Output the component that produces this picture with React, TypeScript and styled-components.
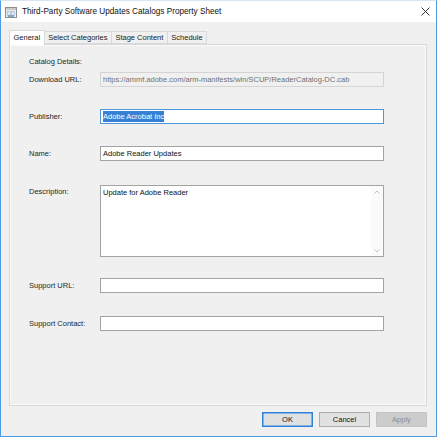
import React, { FC } from 'react';
import styled, { createGlobalStyle } from 'styled-components';

const GlobalStyle = createGlobalStyle`
    html, body {
        margin: 0;
        padding: 0;
        background: #f0f0f0;
        overflow: hidden;
    }
    * {
        box-sizing: border-box;
    }
`;

const Window = styled.div`
    width: 437px;
    height: 437px;
    display: flex;
    flex-direction: column;
    border: 1px solid #4f9ae0;
    border-top-color: #d8e6f3;
    background: #f0f0f0;
    font-family: 'Liberation Sans', Arial, sans-serif;
    font-size: 7.5px;
    color: #222;
`;

const TitleBar = styled.div`
    height: 21px;
    flex: none;
    display: flex;
    align-items: center;
    background: #ffffff;
    padding-left: 4px;
    padding-right: 6px;
`;

const TitleIcon = styled.span`
    display: flex;
    width: 12px;
    height: 12px;
    margin-right: 5px;
`;

const TitleText = styled.span`
    flex: 1;
    font-size: 8.2px;
    color: #111;
`;

const CloseBox = styled.span`
    display: flex;
    width: 9px;
    height: 9px;
`;

const Body = styled.div`
    flex: 1;
    display: flex;
    flex-direction: column;
    padding: 8px 9px 9px 8px;
`;

const TabStrip = styled.div`
    display: flex;
    align-items: flex-end;
    position: relative;
    z-index: 1;
`;

const Tab = styled.div<{ $active?: boolean }>`
    display: flex;
    align-items: center;
    justify-content: center;
    padding: 0 3.5px;
    height: ${(p) => (p.$active ? '15px' : '13px')};
    margin-bottom: ${(p) => (p.$active ? '-1px' : '0')};
    margin-left: ${(p) => (p.$active ? '0' : '-1px')};
    padding-bottom: ${(p) => (p.$active ? '2px' : '0')};
    background: ${(p) => (p.$active ? '#ffffff' : '#f0f0f0')};
    border: 1px solid #d9d9d9;
    border-bottom: ${(p) => (p.$active ? 'none' : '1px solid #d9d9d9')};
    color: #1a1a1a;
    white-space: nowrap;
`;

const Panel = styled.div`
    height: 362px;
    flex: none;
    border: 1px solid #d9d9d9;
    box-shadow: inset 0 0 0 1px #fafafa;
    background: #f0f0f0;
    padding: 9px 0 0 19px;
    display: flex;
    flex-direction: column;
`;

const Row = styled.div<{ $gap: number; $top?: boolean }>`
    display: flex;
    align-items: ${(p) => (p.$top ? 'flex-start' : 'center')};
    margin-top: ${(p) => p.$gap}px;
    min-height: 15px;
`;

const Label = styled.span<{ $top?: boolean }>`
    width: 71px;
    flex: none;
    padding-top: ${(p) => (p.$top ? '2px' : '0')};
    color: #262626;
    white-space: nowrap;
`;

type FieldMode = 'normal' | 'focus' | 'disabled';

const Field = styled.div<{ $mode?: FieldMode }>`
    width: 284px;
    height: 15px;
    display: flex;
    align-items: center;
    padding: 0 2px;
    background: ${(p) => (p.$mode === 'disabled' ? '#f0f0f0' : '#ffffff')};
    border: 1px solid
        ${(p) =>
            p.$mode === 'focus'
                ? '#4d97dd'
                : p.$mode === 'disabled'
                ? '#d4d4d4'
                : '#a3a3a3'};
    color: ${(p) => (p.$mode === 'disabled' ? '#707070' : '#111')};
    white-space: nowrap;
    overflow: hidden;
`;

const Selected = styled.span`
    background: #3680d6;
    color: #ffffff;
    padding: 1px 0;
`;

const TextArea = styled.div`
    width: 284px;
    height: 72px;
    display: flex;
    background: #ffffff;
    border: 1px solid #a3a3a3;
`;

const TextAreaBody = styled.div`
    flex: 1;
    padding: 2px 2px;
    color: #111;
`;

const ScrollBar = styled.div`
    width: 12px;
    display: flex;
    flex-direction: column;
    justify-content: space-between;
    align-items: center;
    background: #fbfbfb;
    padding: 4px 0 3px;
`;

const ButtonRow = styled.div`
    display: flex;
    justify-content: flex-end;
    gap: 6px;
    margin-top: 6px;
`;

const Button = styled.div<{ $primary?: boolean; $disabled?: boolean }>`
    width: 51px;
    height: 15px;
    display: flex;
    align-items: center;
    justify-content: center;
    background: ${(p) => (p.$disabled ? '#cccccc' : '#e1e1e1')};
    border: 1px solid
        ${(p) => (p.$primary ? '#2c83d9' : p.$disabled ? '#c4c4c4' : '#adadad')};
    box-shadow: ${(p) => (p.$primary ? 'inset 0 0 0 0.5px #2c83d9' : 'none')};
    color: ${(p) => (p.$disabled ? '#8d8d8d' : '#111')};
`;

const Chevron: FC<{ up?: boolean }> = ({ up }) => (
    <svg width="6" height="4" viewBox="0 0 6 4">
        <path
            d={up ? 'M0.5 3.5 L3 1 L5.5 3.5' : 'M0.5 0.5 L3 3 L5.5 0.5'}
            fill="none"
            stroke="#c2c2c2"
            strokeWidth="1"
        />
    </svg>
);

const App: FC = () => {
    return (
        <>
            <GlobalStyle />
            <Window>
                <TitleBar>
                    <TitleIcon>
                        <svg width="12" height="12" viewBox="0 0 12 12">
                            <rect x="0.5" y="1.5" width="11" height="10" fill="#ececec" stroke="#8c8c8c" />
                            <rect x="1" y="2" width="10" height="2" fill="#c9c9c9" />
                            <rect x="2.5" y="5.5" width="3" height="4" fill="#dfe8f2" stroke="#9fb6cc" strokeWidth="0.6" />
                            <rect x="6.5" y="5.5" width="3" height="4" fill="#dfe8f2" stroke="#9fb6cc" strokeWidth="0.6" />
                            <rect x="3" y="9" width="6" height="2" fill="#7aa7d6" />
                        </svg>
                    </TitleIcon>
                    <TitleText>Third-Party Software Updates Catalogs Property Sheet</TitleText>
                    <CloseBox>
                        <svg width="9" height="9" viewBox="0 0 9 9">
                            <path d="M0.5 0.5 L8.5 8.5 M8.5 0.5 L0.5 8.5" stroke="#222" strokeWidth="0.9" />
                        </svg>
                    </CloseBox>
                </TitleBar>
                <Body>
                    <TabStrip>
                        <Tab $active>General</Tab>
                        <Tab>Select Categories</Tab>
                        <Tab>Stage Content</Tab>
                        <Tab>Schedule</Tab>
                    </TabStrip>
                    <Panel>
                        <Row $gap={0}>
                            <Label>Catalog Details:</Label>
                        </Row>
                        <Row $gap={3}>
                            <Label>Download URL:</Label>
                            <Field $mode="disabled">
                                https://ammf.adobe.com/arm-manifests/win/SCUP/ReaderCatalog-DC.cab
                            </Field>
                        </Row>
                        <Row $gap={22}>
                            <Label>Publisher:</Label>
                            <Field $mode="focus">
                                <Selected>Adobe Acrobat Inc</Selected>
                            </Field>
                        </Row>
                        <Row $gap={22}>
                            <Label>Name:</Label>
                            <Field>Adobe Reader Updates</Field>
                        </Row>
                        <Row $gap={24} $top>
                            <Label $top>Description:</Label>
                            <TextArea>
                                <TextAreaBody>Update for Adobe Reader</TextAreaBody>
                                <ScrollBar>
                                    <Chevron up />
                                    <Chevron />
                                </ScrollBar>
                            </TextArea>
                        </Row>
                        <Row $gap={21}>
                            <Label>Support URL:</Label>
                            <Field />
                        </Row>
                        <Row $gap={23}>
                            <Label>Support Contact:</Label>
                            <Field />
                        </Row>
                    </Panel>
                    <ButtonRow>
                        <Button $primary>OK</Button>
                        <Button>Cancel</Button>
                        <Button $disabled>Apply</Button>
                    </ButtonRow>
                </Body>
            </Window>
        </>
    );
};

export default App;
